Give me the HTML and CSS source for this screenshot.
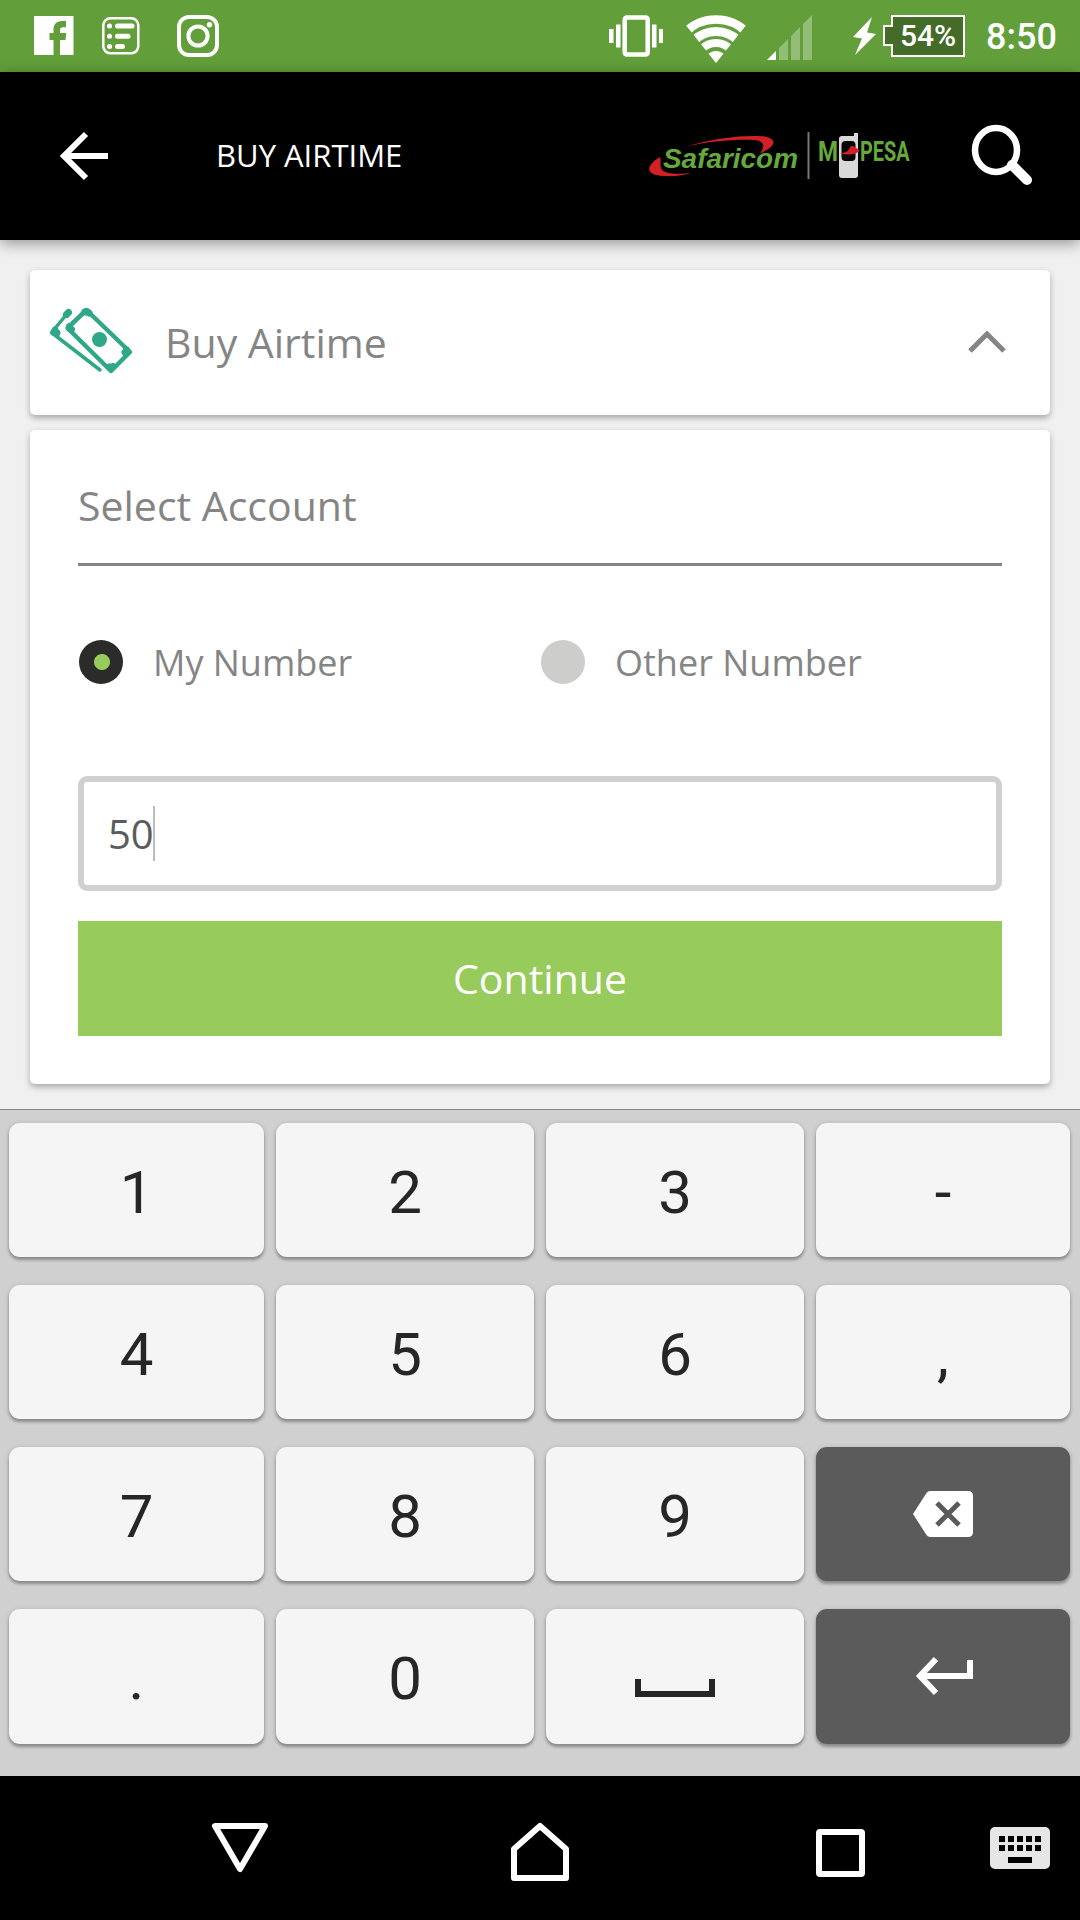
FILE: index.html
```html
<!DOCTYPE html>
<html lang="en">
<head>
<meta charset="utf-8">
<title>Buy Airtime</title>
<link rel="stylesheet" href="styles.css">
</head>
<body>
<div class="screen">
  <div class="status">
    <svg class="fb" width="40" height="40" viewBox="0 0 40 40"><path fill="#fff" d="M0 0h39.5v39H26V24h5.5l.8-7H26v-3c0-2 1-2.800 3-2.800h3V5h-4c-6 0-8.500 4-8.500 8.500V17H15.500v7h4v15H0z"/></svg>
    <svg class="list" width="38" height="38" viewBox="0 0 38 38" fill="none" stroke="#fff" stroke-linecap="round"><rect x="1.300" y="1.300" width="35" height="35" rx="7" stroke-width="2.500"/><path stroke-width="5" d="M7.500 9h.1M7.500 19.300h.1M7.500 29.500h.1M15.500 9H30M15.500 19.300h10.500M15.500 29.500h5"/></svg>
    <svg class="insta" width="42" height="42" viewBox="0 0 42 42" fill="none" stroke="#fff" stroke-width="4"><rect x="2" y="2" width="38" height="38" rx="10"/><circle cx="21" cy="21" r="9.600"/><circle cx="32.500" cy="9.800" r="2.700" fill="#fff" stroke="none"/></svg>
    <svg class="vibrate" width="54" height="42" viewBox="0 0 54 42"><path fill="#fff" d="M0 14h4.500v14H0zM7 9.500h4.500v23H7zM43 9.500h4.500v23H43zM50 14h4v14h-4z"/><rect x="15.700" y="2.500" width="23" height="37" rx="2" fill="none" stroke="#fff" stroke-width="4.500"/></svg>
    <svg class="wifi" width="58" height="48" viewBox="0 0 58 48"><defs><clipPath id="fan"><path d="M29 48-4.500 6V-5h67V6z"/></clipPath></defs><g clip-path="url(#fan)" fill="none" stroke="#fff"><circle cx="29" cy="48" r="43.500" stroke-width="8.500"/><circle cx="29" cy="48" r="31.500" stroke-width="9"/><circle cx="29" cy="48" r="20" stroke-width="8"/><circle cx="29" cy="48" r="6" stroke-width="12"/></g></svg>
    <svg class="signal" width="45" height="44" viewBox="0 0 45 44"><path fill="#fff" d="M0 44l9-9v9z"/><path fill="#92bd76" d="M12 32l9-9v21h-9zM24 20l9-9v33h-9zM36 8l9-9v45h-9z"/></svg>
    <svg class="bolt" width="23" height="38" viewBox="0 0 23 38"><path fill="#fff" d="M19 0 0 20l9 1.500L2 38 23 17l-9-1.500z"/></svg>
    <div class="battery"><svg width="82" height="42" viewBox="0 0 82 42"><path fill="#446c28" stroke="#fff" stroke-width="2" d="M9 1h72v40H9V30H1V11h8z"/></svg><span>54%</span></div>
    <span class="clock">8:50</span>
  </div>

  <header class="appbar">
    <svg class="back" width="48" height="48" viewBox="0 0 48 48" fill="none" stroke="#fff" stroke-width="6"><path d="M26 2 4 24l22 22M4 24h44"/></svg>
    <h1>BUY AIRTIME</h1>
    <svg class="brand" width="262" height="50" viewBox="648 131 262 50">
      <path fill="#d32027" d="M687 146.500C713 138 745 135 762 136.300c16 1.500 15 10-2 17.200 5-7 5-12.500-6-13.500-17-1-46 1-67 6.500z"/>
      <path fill="#d32027" d="M660 157c-15 9-15 18 4 19 10 .6 20-.5 27-3-13 1.500-27 1-29.500-4-2-4 0-8-1.500-12z"/>
      <text x="663" y="168" class="safari" textLength="135" lengthAdjust="spacingAndGlyphs">Safaricom</text>
      <path stroke="#777" stroke-width="2" d="M808.500 132v47"/>
      <text x="818" y="161" class="pesa" textLength="20" lengthAdjust="spacingAndGlyphs">M</text>
      <path fill="#d9d9d9" d="M842 136h12v-3h4v42q0 3-3 3h-13q-3 0-3-3v-36q0-3 3-3z"/>
      <rect x="841.500" y="141" width="14" height="20" rx="4" fill="#050505"/>
      <path fill="#d32027" d="M840 153.500c6-1 8-2 10-6 2-3 4-1 10 3-4 4-10 5-20 3z"/>
      <text x="860" y="161" class="pesa" textLength="49.500" lengthAdjust="spacingAndGlyphs">PESA</text>
    </svg>
    <svg class="search" width="60" height="60" viewBox="0 0 60 60" fill="none" stroke="#fff"><ellipse cx="24" cy="25" rx="21" ry="22" stroke-width="6.500"/><path d="M40 40 55 55" stroke-width="10" stroke-linecap="round"/></svg>
  </header>

  <main class="content">
    <section class="card head">
      <svg class="cash" width="84" height="70" viewBox="0 0 84 70" fill="none" stroke="#2ea887" stroke-width="4.500" stroke-linejoin="round" stroke-linecap="round"><path d="M37.500 4 81 46 62 65 18.500 22z"/><path d="M20 5.500 2.500 26.500 51 64" stroke-width="3.500"/><path stroke-width="7" d="M36 6 38 5.500 40 7M20.500 20.500l0 2 2 1M77.500 44l.5 1.500-2 1M60.500 61l1.500 1 2-1.500M19.500 6.500l-2 2M6 24l-1 2.500 3 .5"/><circle cx="50.500" cy="33.500" r="7.500" fill="#2ea887" stroke="none"/></svg>
      <h2>Buy Airtime</h2>
      <svg class="chevron" width="38" height="26" viewBox="0 0 38 26" fill="none" stroke="#858585" stroke-width="5"><path d="M2 22 19 5l17 17"/></svg>
    </section>
    <section class="card form">
      <div class="select">Select Account</div>
      <div class="options">
        <label class="option"><i class="radio on"></i><span>My Number</span></label>
        <label class="option"><i class="radio"></i><span>Other Number</span></label>
      </div>
      <div class="amount"><span>50</span><i class="caret"></i></div>
      <button class="continue">Continue</button>
    </section>
  </main>

  <div class="keyboard">
    <div class="key">1</div><div class="key">2</div><div class="key">3</div><div class="key">-</div>
    <div class="key">4</div><div class="key">5</div><div class="key">6</div><div class="key">,</div>
    <div class="key">7</div><div class="key">8</div><div class="key">9</div>
    <div class="key dark"><svg width="60" height="46" viewBox="0 0 60 46"><path fill="#fff" d="M17 0h38q5 0 5 5v36q0 5-5 5H17q-2 0-3.500-2L0 23 13.500 2Q15 0 17 0z"/><path stroke="#5b5b5b" stroke-width="5" d="M24 12l22 22M46 12 24 34"/></svg></div>
    <div class="key">.</div><div class="key">0</div>
    <div class="key space"><svg width="80" height="18" viewBox="0 0 80 18"><path fill="none" stroke="#262626" stroke-width="6" d="M3 0v15h74V0"/></svg></div>
    <div class="key dark enter"><svg width="57" height="38" viewBox="0 0 57 38" fill="none" stroke="#fff" stroke-width="6"><path d="M20 2 4 19l16 17M4 19h50V3"/></svg></div>
  </div>

  <nav class="nav">
    <svg class="n-back" width="56" height="52" viewBox="0 0 56 52"><path fill="none" stroke="#fff" stroke-width="6" stroke-linejoin="round" d="M3 3h50L28 46z"/></svg>
    <svg class="n-home" width="58" height="60" viewBox="0 0 58 60"><path fill="none" stroke="#fff" stroke-width="6" stroke-linejoin="round" d="M3 56V27L29 4l26 23v29z"/></svg>
    <svg class="n-recent" width="49" height="48" viewBox="0 0 49 48"><rect x="3" y="3" width="43" height="42" rx="1" fill="none" stroke="#fff" stroke-width="6"/></svg>
    <svg class="n-kb" width="60" height="42" viewBox="0 0 60 42"><rect width="60" height="42" rx="5" fill="#e6e6e6"/><path stroke="#000" stroke-width="6" stroke-dasharray="6 3" d="M9 12h42M9 21h42"/><path stroke="#000" stroke-width="6" d="M18 33h24"/></svg>
  </nav>
</div>
</body>
</html>
```
FILE: styles.css
```css
* { box-sizing: border-box; margin: 0; }
body { background: #000; font-family: "Open Sans", "Noto Sans", sans-serif; }
svg { display: block; flex: none; overflow: visible; }
.screen { width: 1080px; height: 1920px; display: flex; flex-direction: column; overflow: hidden; }

.status { height: 72px; flex: none; background: #629f3a; display: flex; align-items: center; color: #fff; font-family: Roboto, sans-serif; font-weight: 500; padding-left: 34px; }
.list { margin-left: 28px; }
.insta { margin-left: 37px; }
.vibrate { margin-left: 390px; }
.wifi { margin: 6px 0 0 24px; }
.signal { margin: 4px 0 0 22px; }
.bolt { margin-left: 41px; }
.battery { display: grid; margin-left: 7px; }
.battery > * { grid-area: 1 / 1; }
.battery span { font-size: 30px; line-height: 41px; padding-left: 17px; }
.clock { font-size: 36px; margin: 2px 0 0 21px; }

.appbar { height: 168px; flex: none; background: #000; color: #fff; display: flex; align-items: center; padding-left: 60px; box-shadow: 0 3px 14px rgba(0,0,0,.4); z-index: 1; }
.appbar h1 { font-weight: 400; font-size: 31px; line-height: 40px; width: 431px; margin: 0 0 3px 108px; white-space: nowrap; }
.brand { margin-left: 1px; }
.safari { font: italic bold 28px "Liberation Sans", sans-serif; fill: #65a93c; }
.pesa { font: 700 28px Roboto, sans-serif; fill: #65a93c; }
.search { margin: 0 0 3px 62px; }

.content { flex: 1; background: #f0f0f0; padding: 30px 30px 0; }
.card { background: #fff; border-radius: 5px; box-shadow: 0 3px 6px rgba(0,0,0,.3); color: #858585; }
.head { height: 145px; display: flex; align-items: center; padding: 0 44px 0 19px; }
.cash { margin-bottom: 4px; }
.head h2 { font-weight: 400; font-size: 41px; line-height: 54px; margin: 0 auto 2px 32px; }
.chevron { margin-bottom: 1px; }
.form { margin-top: 15px; height: 654px; padding: 0 48px; font-size: 40px; }
.select { height: 136px; border-bottom: 3px solid #858585; font-size: 41px; line-height: 150px; }
.options { display: grid; grid-template-columns: 1fr 1fr; height: 210px; padding-top: 74px; }
.option { display: flex; gap: 30px; font-size: 36px; line-height: 44px; height: 44px; }
.option span { padding-top: 1px; }
.radio { width: 44px; height: 44px; margin-left: 1px; border-radius: 50%; background: #cdcdcc; flex: none; }
.radio.on { background: radial-gradient(circle at 23px 22px, #97cc5d 7.500px, #2b2b2a 8.500px); }
.amount { height: 115px; border: 6px solid #d0d0d0; border-radius: 9px; display: flex; align-items: center; padding-left: 24px; color: #5b5b5b; }
.caret { width: 2px; height: 55px; margin-left: -1px; background: #bbb; }
.continue { display: block; width: 100%; height: 115px; margin-top: 30px; border: 0; background: #97cc5d; color: #fff; font: 400 41px "Open Sans", sans-serif; padding: 0 0 2px; }

.keyboard { height: 667px; flex: none; background: #d0d0d0; border-top: 1px solid #858585; display: grid; grid-template-columns: 255px 258px 258px 254px; grid-template-rows: 134px 134px 134px 135px; gap: 28px 12px; padding: 13px 10px 0 9px; }
.key { background: #f5f5f5; border-radius: 11px; box-shadow: 0 3px 3px rgba(0,0,0,.26), 0 1px 5px rgba(0,0,0,.18); display: flex; align-items: center; justify-content: center; font: 400 60px Roboto, sans-serif; color: #262626; padding-top: 4px; }
.key.dark { background: #5b5b5b; padding: 0; }
.key.enter { padding: 0 0 2px 3px; }
.key.space { padding-top: 23px; }

.nav { height: 144px; flex: none; background: #000; display: flex; align-items: flex-start; padding-left: 212px; }
.n-back { margin-top: 47px; }
.n-home { margin: 46px 0 0 243px; }
.n-recent { margin: 53px 0 0 247px; }
.n-kb { margin: 51px 0 0 125px; }
```
